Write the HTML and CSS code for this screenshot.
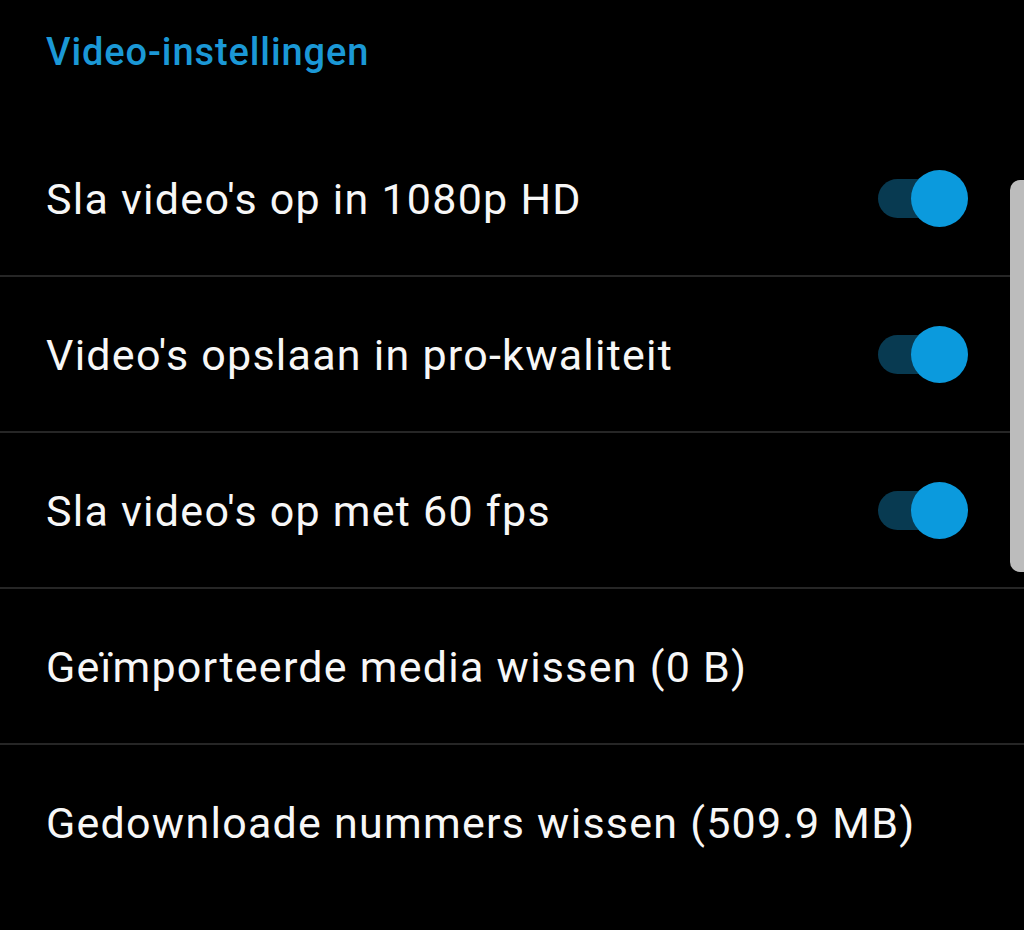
FILE: index.html
```html
<!DOCTYPE html>
<html lang="nl">
<head>
<meta charset="utf-8">
<title>Video-instellingen</title>
<link rel="stylesheet" href="styles.css">
</head>
<body>
<div class="screen">
  <div class="header">Video-instellingen</div>
  <ul class="list">
    <li class="row"><span class="label">Sla video's op in 1080p HD</span><span class="switch on"><span class="track"></span><span class="thumb"></span></span></li>
    <li class="row"><span class="label">Video's opslaan in pro-kwaliteit</span><span class="switch on"><span class="track"></span><span class="thumb"></span></span></li>
    <li class="row"><span class="label">Sla video's op met 60 fps</span><span class="switch on"><span class="track"></span><span class="thumb"></span></span></li>
    <li class="row"><span class="label">Geïmporteerde media wissen (0 B)</span></li>
    <li class="row last"><span class="label">Gedownloade nummers wissen (509.9 MB)</span></li>
  </ul>
  <div class="scrollbar"></div>
</div>
</body>
</html>
```

FILE: styles.css
```css
html, body {
  margin: 0;
  padding: 0;
  background: #000;
}
.screen {
  position: relative;
  width: 1024px;
  height: 930px;
  overflow: hidden;
  background: #000;
  font-family: Roboto, "Noto Sans", sans-serif;
}
.header {
  height: 121px;
  box-sizing: border-box;
  padding: 26px 0 0 46px;
  font-size: 38px;
  font-weight: 500;
  letter-spacing: 0.9px;
  color: #1b98d6;
  line-height: 52px;
}
.list {
  list-style: none;
  margin: 0;
  padding: 0;
}
.row {
  height: 154px;
  border-bottom: 2px solid #262626;
  display: flex;
  align-items: center;
  justify-content: space-between;
  padding: 0 56px 0 46px;
  box-sizing: content-box;
}
.row.last {
  border-bottom: none;
}
.label {
  font-size: 43px;
  letter-spacing: 1.25px;
  color: #f7f7f7;
  line-height: 52px;
  padding-top: 2px;
}
.switch {
  position: relative;
  width: 90px;
  height: 57px;
  flex: none;
}
.track {
  position: absolute;
  left: 0;
  top: 9px;
  width: 82px;
  height: 39px;
  border-radius: 20px;
  background: #083a51;
}
.thumb {
  position: absolute;
  right: 0;
  top: 0;
  width: 57px;
  height: 57px;
  border-radius: 50%;
  background: #0b9add;
}
.scrollbar {
  position: absolute;
  right: 0;
  top: 180px;
  width: 14px;
  height: 392px;
  background: #bcbcbc;
  border-radius: 10px 0 0 10px;
}
```
